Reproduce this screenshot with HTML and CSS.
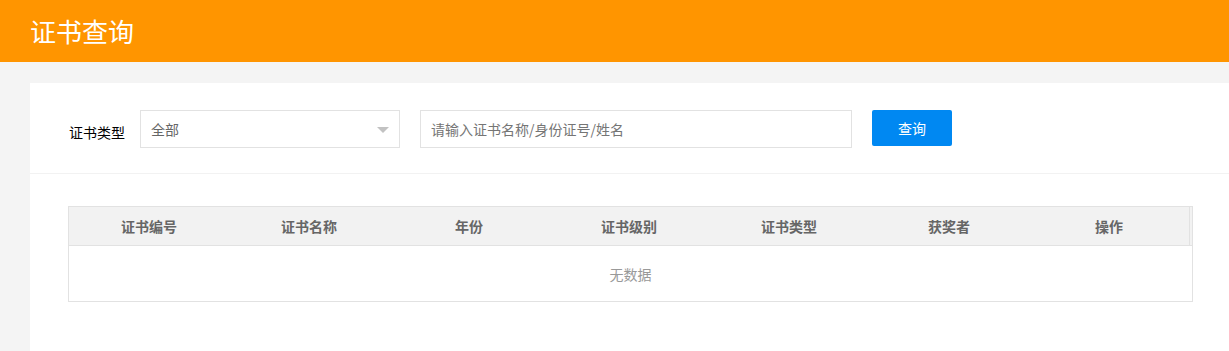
FILE: index.html
```html
<!DOCTYPE html>
<html lang="zh-CN">
<head>
  <meta charset="UTF-8">
  <title>证书查询</title>
  <link rel="stylesheet" href="styles.css">
</head>
<body>

  <div class="topbar">
    <h1>证书查询</h1>
  </div>

  <div class="panel">
    <div class="filter">
      <label class="filter-label">证书类型</label>
      <div class="select">
        <span>全部</span>
        <i class="caret"></i>
      </div>
      <input class="keyword" type="text" placeholder="请输入证书名称/身份证号/姓名">
      <button class="btn">查询</button>
    </div>

    <div class="list">
      <table class="grid">
        <thead>
          <tr>
            <th>证书编号</th>
            <th>证书名称</th>
            <th>年份</th>
            <th>证书级别</th>
            <th>证书类型</th>
            <th>获奖者</th>
            <th>操作</th>
            <th class="gutter"></th>
          </tr>
        </thead>
        <tbody>
          <tr>
            <td class="empty" colspan="8">无数据</td>
          </tr>
        </tbody>
      </table>
    </div>
  </div>

</body>
</html>
```

FILE: styles.css
```css
body {
  margin: 0;
  padding: 0;
  background: #f4f4f4;
  font-family: "Microsoft YaHei", "Noto Sans CJK SC", sans-serif;
  font-size: 14px;
  color: #333;
}
.topbar {
  height: 62px;
  background: #ff9500;
  padding: 0 30px;
  display: flex;
  align-items: center;
}
.topbar h1 {
  margin: 0;
  font-size: 26px;
  font-weight: normal;
  color: #fff;
  line-height: 1;
}
.panel {
  margin: 21px 0 0 30px;
  background: #fff;
  min-height: 268px;
}
.filter {
  display: flex;
  align-items: center;
  padding: 27px 0 25px 39px;
  border-bottom: 1px solid #f2f2f2;
}
.filter-label {
  font-size: 14px;
  color: #000;
  margin-right: 15px;
  padding-top: 6px;
}
.select {
  width: 260px;
  height: 38px;
  box-sizing: border-box;
  border: 1px solid #e2e2e2;
  display: flex;
  align-items: center;
  justify-content: space-between;
  padding: 0 10px;
  color: #666;
  font-size: 14px;
}
.caret {
  width: 0;
  height: 0;
  border-left: 6px solid transparent;
  border-right: 6px solid transparent;
  border-top: 6px solid #c2c2c2;
  margin-top: 2px;
}
.keyword {
  width: 432px;
  height: 38px;
  box-sizing: border-box;
  border: 1px solid #e2e2e2;
  margin-left: 20px;
  padding: 0 10px;
  font-family: inherit;
  font-size: 14px;
  outline: none;
}
.keyword::placeholder {
  color: #757575;
}
.btn {
  width: 80px;
  height: 36px;
  margin-left: 20px;
  margin-top: -2px;
  border: none;
  border-radius: 2px;
  background: #0088f2;
  color: #fff;
  font-family: inherit;
  font-size: 14px;
  cursor: pointer;
}
.list {
  padding: 32px 36px 0 38px;
}
.grid {
  width: 1125px;
  border-collapse: collapse;
  border: 1px solid #e2e2e2;
  table-layout: fixed;
}
.grid th {
  width: 160px;
  height: 38px;
  background: #f2f2f2;
  color: #666;
  font-size: 14px;
  font-weight: bold;
  border-bottom: 1px solid #e2e2e2;
  padding: 0;
}
.grid th.gutter {
  width: 2px;
  border-left: 1px solid #e2e2e2;
}
.empty {
  height: 55px;
  text-align: center;
  color: #999;
  font-size: 14px;
  padding: 0;
}
```
